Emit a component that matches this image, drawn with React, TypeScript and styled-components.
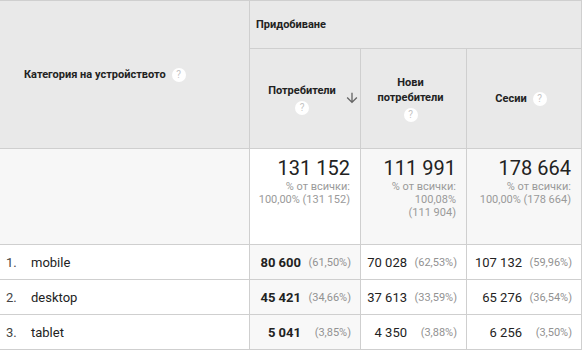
import React from "react";
import styled, { createGlobalStyle } from "styled-components";

const Global = createGlobalStyle`
  html, body { margin: 0; padding: 0; background: #fff; }
  body { font-family: Roboto, "Liberation Sans", Arial, sans-serif; color: #222; }
`;

const BORDER = "#cfcfcf";

const Grid = styled.div`
  display: grid;
  grid-template-columns: 250px 111px 106px 115px;
  grid-template-rows: 48px 100px 96px 35px 35px 35px;
  width: 582px;
  border-top: 1px solid ${BORDER};
  box-sizing: border-box;
`;

const Cell = styled.div<{ $bg?: string }>`
  box-sizing: border-box;
  border-right: 1px solid ${BORDER};
  border-bottom: 1px solid ${BORDER};
  background: ${(p) => p.$bg || "#fff"};
  min-width: 0;
`;

const DimHead = styled(Cell)`
  grid-row: 1 / span 2;
  display: flex;
  align-items: center;
  padding-left: 24px;
  background: #e9e9e9;
  font-size: 11px;
  font-weight: 700;
  color: #222;
`;

const GroupHead = styled(Cell)`
  grid-column: 2 / span 3;
  display: flex;
  align-items: center;
  padding-left: 6px;
  padding-bottom: 1px;
  background: #e9e9e9;
  font-size: 11px;
  font-weight: 700;
  color: #222;
`;

const MetricHead = styled(Cell)`
  position: relative;
  display: flex;
  flex-direction: column;
  align-items: center;
  justify-content: center;
  padding: 0 14px 0 8px;
  background: #e9e9e9;
  font-size: 11px;
  font-weight: 700;
  line-height: 15px;
  color: #222;
  text-align: center;
`;

const InlineRow = styled.div`
  display: flex;
  align-items: center;
  gap: 6px;
`;

const HelpIcon = styled.span<{ $below?: boolean }>`
  display: inline-flex;
  align-items: center;
  justify-content: center;
  width: 14px;
  height: 14px;
  border-radius: 50%;
  background: #fff;
  color: #c4c4c4;
  font-size: 10px;
  font-weight: 400;
  line-height: 1;
  flex: none;
  margin-top: ${(p) => (p.$below ? "3px" : "0")};
`;

const SortArrow = styled.svg`
  position: absolute;
  right: 0;
  top: 41px;
  width: 16px;
  height: 16px;
`;

const SummaryLabel = styled(Cell)`
  background: #f7f7f7;
`;

const SummaryCell = styled(Cell)`
  display: flex;
  flex-direction: column;
  align-items: flex-end;
  padding: 7px 10px 0 0;
  text-align: right;
`;

const BigNumber = styled.div`
  font-size: 20px;
  line-height: 24px;
  color: #222;
`;

const SmallNote = styled.div`
  font-size: 11px;
  line-height: 13px;
  color: #9a9a9a;
`;

const NameCell = styled(Cell)`
  display: flex;
  align-items: center;
  font-size: 13px;
  color: #222;
`;

const Index = styled.span`
  width: 31px;
  padding-left: 6px;
  box-sizing: border-box;
  color: #444;
`;

const ValueCell = styled(Cell)<{ $bold?: boolean }>`
  display: flex;
  align-items: center;
  justify-content: flex-end;
  padding-right: 9px;
  font-size: 13px;
  font-weight: ${(p) => (p.$bold ? 700 : 400)};
  color: #222;
`;

const Pct = styled.span`
  width: 50px;
  text-align: right;
  font-size: 11px;
  font-weight: 400;
  color: #929292;
`;

const rows = [
  { name: "mobile", v: [["80 600", "(61,50%)"], ["70 028", "(62,53%)"], ["107 132", "(59,96%)"]] },
  { name: "desktop", v: [["45 421", "(34,66%)"], ["37 613", "(33,59%)"], ["65 276", "(36,54%)"]] },
  { name: "tablet", v: [["5 041", "(3,85%)"], ["4 350", "(3,88%)"], ["6 256", "(3,50%)"]] },
];

export default function App() {
  return (
    <>
      <Global />
      <Grid>
        <DimHead>
          <InlineRow>
            <span>Категория на устройството</span>
            <HelpIcon>?</HelpIcon>
          </InlineRow>
        </DimHead>
        <GroupHead>Придобиване</GroupHead>
        <MetricHead>
          <span>Потребители</span>
          <HelpIcon $below>?</HelpIcon>
          <SortArrow viewBox="0 0 24 24">
            <path fill="#666" d="M20 12l-1.41-1.41L13 16.17V4h-2v12.17l-5.58-5.59L4 12l8 8 8-8z" />
          </SortArrow>
        </MetricHead>
        <MetricHead>
          <span>Нови</span>
          <span>потребители</span>
          <HelpIcon $below>?</HelpIcon>
        </MetricHead>
        <MetricHead>
          <InlineRow>
            <span>Сесии</span>
            <HelpIcon>?</HelpIcon>
          </InlineRow>
        </MetricHead>

        <SummaryLabel />
        <SummaryCell $bg="#fff">
          <BigNumber>131 152</BigNumber>
          <SmallNote>% от всички:</SmallNote>
          <SmallNote>100,00% (131 152)</SmallNote>
        </SummaryCell>
        <SummaryCell $bg="#f7f7f7">
          <BigNumber>111 991</BigNumber>
          <SmallNote>% от всички:</SmallNote>
          <SmallNote>100,08%</SmallNote>
          <SmallNote>(111 904)</SmallNote>
        </SummaryCell>
        <SummaryCell $bg="#f7f7f7">
          <BigNumber>178 664</BigNumber>
          <SmallNote>% от всички:</SmallNote>
          <SmallNote>100,00% (178 664)</SmallNote>
        </SummaryCell>

        {rows.map((r, i) => (
          <React.Fragment key={r.name}>
            <NameCell>
              <Index>{i + 1}.</Index>
              <span>{r.name}</span>
            </NameCell>
            {r.v.map(([n, p], j) => (
              <ValueCell key={j} $bold={j === 0} $bg={j === 0 ? "#f8f8f8" : "#fff"}>
                <span>{n}</span>
                <Pct>{p}</Pct>
              </ValueCell>
            ))}
          </React.Fragment>
        ))}
      </Grid>
    </>
  );
}
